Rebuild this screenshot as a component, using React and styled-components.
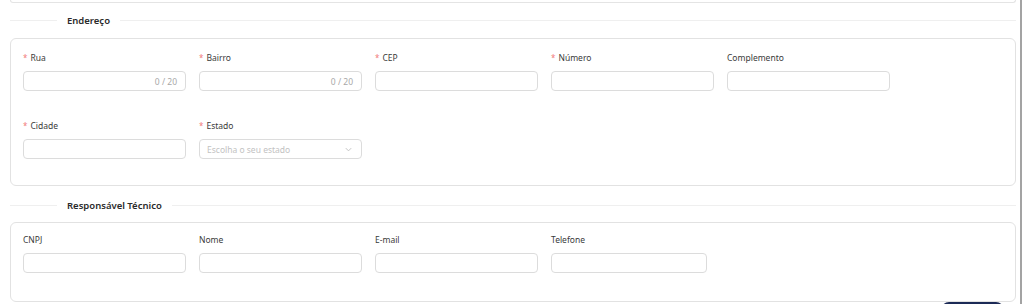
import React from 'react';
import styled, { createGlobalStyle } from 'styled-components';

const GlobalStyle = createGlobalStyle`
  html, body {
    margin: 0;
    padding: 0;
    background: #ffffff;
    font-family: "Noto Sans", "Open Sans", Arial, sans-serif;
    color: #333;
  }
`;

const Page = styled.div`
  box-sizing: border-box;
  width: 1022px;
  height: 304px;
  overflow: hidden;
  border-right: 2px solid #a3a3a3;
  padding: 0 4px 0 10px;
  display: flex;
  flex-direction: column;

  & > * {
    flex-shrink: 0;
  }
`;

const TopCard = styled.div`
  height: 2px;
  border: 1px solid #e4e4e4;
  border-top: none;
  border-radius: 0 0 6px 6px;
`;

const Divider = styled.div`
  display: flex;
  align-items: center;
  gap: 10px;
  height: 16px;
  margin-top: ${(p) => p.$top}px;
  font-size: 9.5px;
  font-weight: 600;
  color: #2b2b2b;

  &::before,
  &::after {
    content: '';
    height: 1px;
    background: #efefef;
  }
  &::before {
    width: 47px;
  }
  &::after {
    flex: 1;
  }
`;

const Card = styled.div`
  margin-top: ${(p) => p.$top}px;
  border: 1px solid #e2e2e2;
  border-radius: 6px;
  padding: ${(p) => p.$pt}px 12px ${(p) => p.$pb}px;
  display: flex;
  flex-direction: column;
  gap: 28px;
`;

const Row = styled.div`
  display: grid;
  grid-template-columns: repeat(5, 163px);
  column-gap: 13px;
`;

const Field = styled.div`
  display: flex;
  flex-direction: column;
`;

const Label = styled.label`
  height: 14px;
  line-height: 14px;
  font-size: 8.5px;
  color: #3a3a3a;
  margin-bottom: 6px;
  white-space: nowrap;
`;

const Star = styled.span`
  color: #f27b7b;
  font-size: 8px;
  margin-right: 3px;
`;

const InputBox = styled.div`
  box-sizing: border-box;
  width: ${(p) => p.$w || 163}px;
  height: 20px;
  border: 1px solid #dcdcdc;
  border-radius: 4px;
  display: flex;
  align-items: center;
  justify-content: ${(p) => (p.$select ? 'space-between' : 'flex-end')};
  padding: 0 8px 0 7px;
  font-size: 8.5px;
`;

const Counter = styled.span`
  color: #a8a8a8;
`;

const Placeholder = styled.span`
  color: #c2c2c2;
`;

const Footer = styled.div`
  display: flex;
  justify-content: flex-end;
  padding-right: 12px;
`;

const NavyButton = styled.button`
  width: 63px;
  height: 20px;
  border: none;
  border-radius: 8px;
  background: #1c2a56;
`;

const Chevron = () => (
  <svg width="9" height="9" viewBox="0 0 10 10" fill="none">
    <path d="M2 3.5 L5 6.5 L8 3.5" stroke="#bdbdbd" strokeWidth="1" />
  </svg>
);

const FormField = ({ label, required, counter, select, width }) => (
  <Field>
    <Label>
      {required && <Star>*</Star>}
      {label}
    </Label>
    <InputBox $select={select} $w={width}>
      {counter && <Counter>0 / 20</Counter>}
      {select && (
        <>
          <Placeholder>Escolha o seu estado</Placeholder>
          <Chevron />
        </>
      )}
    </InputBox>
  </Field>
);

export default function App() {
  return (
    <>
      <GlobalStyle />
      <Page>
        <TopCard />
        <Divider $top={9}>Endereço</Divider>
        <Card $top={10} $pt={12} $pb={26}>
          <Row>
            <FormField label="Rua" required counter />
            <FormField label="Bairro" required counter />
            <FormField label="CEP" required />
            <FormField label="Número" required />
            <FormField label="Complemento" />
          </Row>
          <Row>
            <FormField label="Cidade" required />
            <FormField label="Estado" required select />
          </Row>
        </Card>
        <Divider $top={11}>Responsável Técnico</Divider>
        <Card $top={9} $pt={10} $pb={28}>
          <Row>
            <FormField label="CNPJ" />
            <FormField label="Nome" />
            <FormField label="E-mail" />
            <FormField label="Telefone" width={156} />
          </Row>
        </Card>
        <Footer>
          <NavyButton />
        </Footer>
      </Page>
    </>
  );
}
